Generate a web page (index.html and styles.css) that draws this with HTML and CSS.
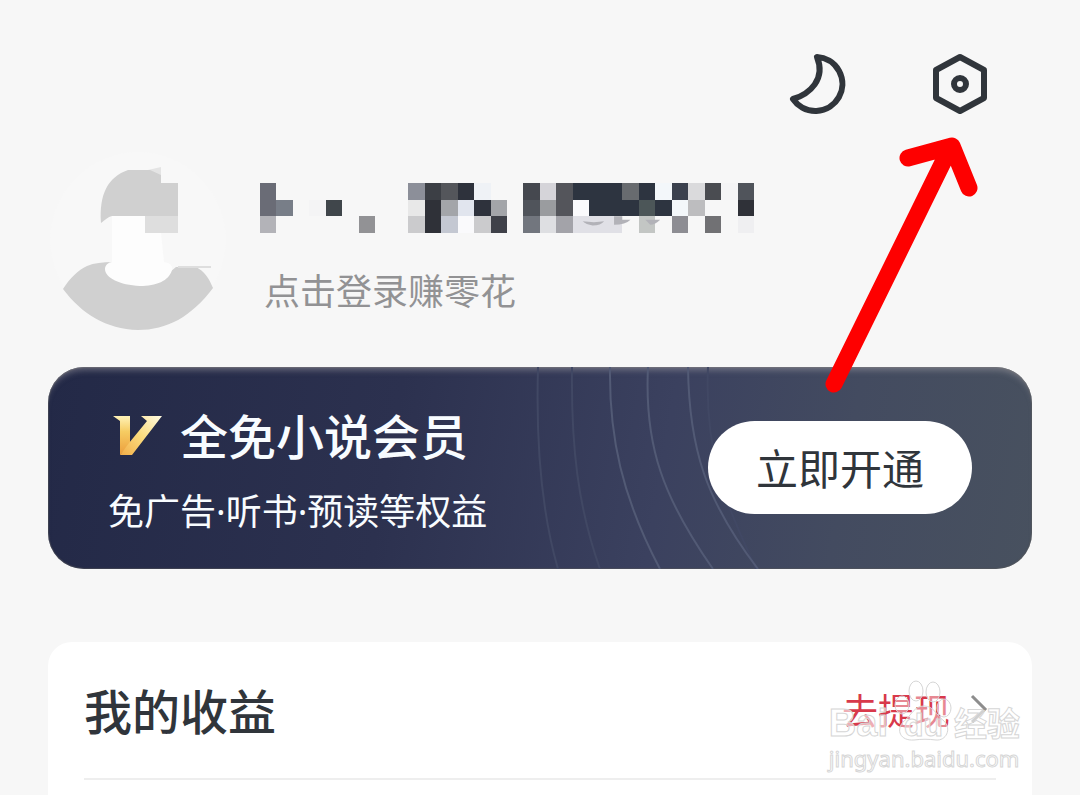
FILE: index.html
```html
<!DOCTYPE html>
<html lang="zh-CN">

<head>
	<meta charset="utf-8">
	<meta name="viewport" content="width=device-width, initial-scale=1">
	<title>我的</title>
	<link rel="stylesheet" href="styles.css">
</head>

<body>
	<header class="topbar">
		<button class="icon-btn" type="button" aria-label="夜间模式">
			<svg width="64" height="64" viewBox="0 0 64 64">
				<path d="M33 5A27 27 0 1 1 9 47C26 42 42 27 33 5Z" />
			</svg>
		</button>
		<button class="icon-btn" type="button" aria-label="设置">
			<svg width="64" height="64" viewBox="0 0 64 64">
				<path d="M32 5L56 18V46L32 59L8 46V18Z" />
				<circle cx="32" cy="32" r="6" />
			</svg>
		</button>
	</header>

	<section class="profile">
		<svg class="avatar" width="180" height="180" viewBox="0 0 180 180">
			<circle cx="90" cy="90" r="88" fill="#f8f8f8" />
			<path fill="#e4e4e4" d="M100 20L113 17V26Z" />
			<path fill="#d0d0d0" d="M53 73C51 44 60 27 80 20H102L113 25V33H130V66H64C60 67 57 70 53 73Z" />
			<path fill="#d0d0d0" d="M15 139C22 128 30 120 39 116C46 113 55 112 64 112L122 122L128 117H148C156 121 161 128 165 138C143 167 119 180 90 180C58 179 34 164 15 139Z" />
			<path fill="#fdfdfd" d="M64 66H97V83H113L116 112C122 113 125 116 124 120C121 131 108 136 92 136C72 135 57 128 57 119C57 115 61 112 64 112Z" />
			<path fill="#dedede" d="M97 66H130V83H97Z" />
			<path fill="#dedede" d="M130 116H163V118H130Z" />
		</svg>
		<div class="profile-text">
			<!-- masked nickname, one unit per block -->
			<svg class="nickname" viewBox="0 0 30 3" preserveAspectRatio="none" shape-rendering="crispEdges">
				<path fill="#6a6c76" d="M0 0h1v2h-1z" />
				<path fill="#8c8f99" d="M9 0h1v1h-1z" />
				<path fill="#3c3f45" d="M10 0h1v1h-1z" />
				<path fill="#54565b" d="M11 0h1v1h-1z" />
				<path fill="#2e323c" d="M12 0h1v1h-1zM13 1h1v1h-1z" />
				<path fill="#eff2f6" d="M13 0h1v1h-1z" />
				<path fill="#45484f" d="M16 0h1v1h-1z" />
				<path fill="#d5d4d9" d="M17 0h1v1h-1z" />
				<path fill="#54555b" d="M18 0h1v2h-1z" />
				<path fill="#2d3440" d="M19 0h3v1h1v1h-3v-1h-1zM23 0h1v1h-1zM24 1h1v1h-1z" />
				<path fill="#686b6f" d="M22 0h1v1h-1z" />
				<path fill="#f3f7fa" d="M24 0h1v1h-1zM25 1h1v1h-1z" />
				<path fill="#3b414e" d="M25 0h1v1h-1z" />
				<path fill="#dadadc" d="M26 0h1v1h-1z" />
				<path fill="#4a4c51" d="M27 0h1v1h-1z" />
				<path fill="#f4f4f5" d="M28 0h1v1h-1zM3 1h1v1h-1z" />
				<path fill="#50545b" d="M29 0h1v1h-1zM16 1h1v1h-1z" />
				<path fill="#787e88" d="M1 1h1v1h-1z" />
				<path fill="#40464b" d="M4 1h1v1h-1z" />
				<path fill="#e8e8e8" d="M9 1h1v1h-1z" />
				<path fill="#2f3138" d="M10 1h1v2h-1zM29 1h1v1h-1z" />
				<path fill="#a3a5a9" d="M11 1h1v1h-1zM14 1h1v1h-1z" />
				<path fill="#e1e5ee" d="M12 1h1v1h-1z" />
				<path fill="#9a9c9f" d="M17 1h1v1h-1z" />
				<path fill="#fafafc" d="M19 1h1v1h-1zM12 2h1v1h-1z" />
				<path fill="#4c5658" d="M23 1h1v1h-1z" />
				<path fill="#bdbdbf" d="M26 1h1v1h-1z" />
				<path fill="#b3b3b8" d="M0 2h1v1h-1z" />
				<path fill="#929295" d="M6 2h1v1h-1z" />
				<path fill="#cbcbcd" d="M9 2h1v1h-1zM13 2h1v1h-1z" />
				<path fill="#c4c8d2" d="M11 2h1v1h-1z" />
				<path fill="#3f4149" d="M14 2h1v1h-1z" />
				<path fill="#72767e" d="M16 2h1v1h-1z" />
				<path fill="#dedfe2" d="M17 2h1v1h-1z" />
				<path fill="#a3a3a9" d="M18 2h1v1h-1z" />
				<path fill="#e0e0e6" d="M19 2h3v1h-3z" />
				<path fill="#c3c6c4" d="M23 2h1v1h-1z" />
				<path fill="#8d8d93" d="M25 2h1v1h-1z" />
				<path fill="#717174" d="M27 2h1v1h-1z" />
				<path fill="#efeff1" d="M29 2h1v1h-1z" />
				<!-- letter bottoms that show below the mask -->
				<g fill="#b2b2b8" shape-rendering="auto">
					<path d="M19.6 2.3Q20.3 2.4 20.9 2.3Q20.7 2.55 20.2 2.55Q19.8 2.5 19.6 2.3Z" />
					<path d="M21.5 2H22V2.2L22.5 2.2Q22.2 2.5 21.5 2.5Z" />
					<path d="M23.4 2.2L24.3 2.2Q24 2.5 23.7 2.5Z" />
				</g>
			</svg>
			<a class="login" href="#">点击登录赚零花</a>
		</div>
	</section>

	<section class="vip">
		<svg class="vip-lines" width="240" height="202" viewBox="0 0 240 202">
			<path class="faint" d="M10 0C8 70 12 140 30 202M44 0C43 80 50 140 72 202M180 0C176 90 200 140 228 202" />
			<path d="M82 0C81 70 94 130 132 202M120 0C116 80 136 132 185 202M160 0C161 82 178 134 230 202" />
		</svg>
		<div class="vip-text">
			<div class="vip-title">
				<svg width="52" height="46" viewBox="0 -4 52 46">
					<defs>
						<linearGradient id="goldL" x1="0" y1="0" x2="0" y2="1">
							<stop offset="0" stop-color="#fff3b8" />
							<stop offset="0.4" stop-color="#f6cc62" />
							<stop offset="1" stop-color="#ec9d3c" />
						</linearGradient>
						<linearGradient id="goldR" x1="1" y1="0" x2="0" y2="1">
							<stop offset="0" stop-color="#fffbe2" />
							<stop offset="0.5" stop-color="#fbdc7e" />
							<stop offset="1" stop-color="#f2ad48" />
						</linearGradient>
					</defs>
					<path fill="url(#goldL)" d="M1 1H18V29L8 40V6Z" />
					<path fill="url(#goldR)" d="M29 1H50L20 40H8L17 28L35 6Z" />
				</svg>
				<h2>全免小说会员</h2>
			</div>
			<p>免广告·听书·预读等权益</p>
		</div>
		<button class="vip-btn" type="button">立即开通</button>
	</section>

	<section class="income">
		<div class="income-head">
			<h2>我的收益</h2>
			<a class="withdraw" href="#">去提现
				<svg width="18" height="32" viewBox="0 0 18 32">
					<path d="M2 3L15 16L2 29" />
				</svg>
			</a>
		</div>
	</section>

	<!-- pointer to the settings button -->
	<svg class="arrow" width="170" height="270" viewBox="0 0 170 270">
		<path d="M14 254L130 18M88 28L132 16L149 58" />
	</svg>

	<div class="watermark">
		<div class="wm-logo">
			<span>Bai</span>
			<svg width="64" height="64" viewBox="0 0 64 64">
				<ellipse cx="12" cy="26" rx="7" ry="9" />
				<ellipse cx="26" cy="12" rx="7" ry="10" />
				<ellipse cx="43" cy="13" rx="7" ry="10" />
				<ellipse cx="54" cy="29" rx="7" ry="9" />
				<path d="M34 27C44 27 46 36 54 42C62 50 56 62 46 61C38 60 32 60 24 61C10 62 6 51 13 43C22 36 24 27 34 27Z" />
				<text x="14" y="57">du</text>
			</svg>
			<span class="wm-cn">经验</span>
		</div>
		<div class="wm-url">jingyan.baidu.com</div>
	</div>
</body>

</html>
```
FILE: styles.css
```css
:root {
	--bg: #f7f7f7;
	--ink: #30353b;
	--grey: #929294;
	--red: #d8394b;
	--side: 48px;
}

* {
	box-sizing: border-box;
}

body {
	position: relative;
	display: flex;
	flex-direction: column;
	min-height: 100vh;
	margin: 0;
	overflow-x: hidden;
	background: var(--bg);
	color: var(--ink);
	font-family: "Noto Sans CJK SC", sans-serif;
}

h2,
p {
	margin: 0;
	font-weight: 400;
}

a {
	text-decoration: none;
}

button {
	border: 0;
	padding: 0;
	cursor: pointer;
	font-family: inherit;
}

svg {
	display: block;
	flex-shrink: 0;
}

.topbar {
	display: flex;
	justify-content: flex-end;
	gap: 80px;
	padding: 52px 88px 0;
}

.icon-btn {
	background: none;
}

.icon-btn svg {
	fill: none;
	stroke: var(--ink);
	stroke-width: 6;
	stroke-linejoin: round;
}

.profile {
	display: flex;
	gap: 32px;
	margin: 34px var(--side) 0;
}

.profile-text {
	flex: 1;
	padding-top: 33px;
}

.nickname {
	width: 494px;
	max-width: 100%;
	height: 50px;
}

.login {
	display: block;
	margin: 30px 4px 0;
	color: var(--grey);
	font-size: 36px;
	line-height: 52px;
}

.vip {
	position: relative;
	display: flex;
	align-items: center;
	justify-content: space-between;
	margin: 37px var(--side) 0;
	padding: 37px 60px 31px;
	border-radius: 36px;
	background: linear-gradient(100deg, #232947 0%, #2c314f 35%, #3b415f 62%, #434b60 80%, #48515f 100%);
	box-shadow: inset 0 7px 6px -4px rgba(170, 165, 170, 0.5), inset 0 0 1px 1px rgba(90, 90, 90, 0.5);
	color: #f8fcff;
}

.vip-lines {
	position: absolute;
	top: 0;
	right: 264px;
	height: 100%;
	fill: none;
	stroke: #525a75;
	stroke-width: 2;
}

.vip-lines .faint {
	stroke: #414864;
}

.vip-title {
	display: flex;
	align-items: center;
	gap: 16px;
	padding-left: 4px;
}

.vip-title h2 {
	font-size: 48px;
	font-weight: 500;
	line-height: 60px;
}

/* Noto Sans first for the narrow middle dot */
.vip-text p {
	margin-top: 22px;
	font-family: "Noto Sans", "Noto Sans CJK SC", sans-serif;
	font-size: 36px;
	line-height: 52px;
}

.vip-btn {
	position: relative;
	margin-bottom: 8px;
	padding: 15px 48px 17px;
	border-radius: 47px;
	background: #fff;
	color: var(--ink);
	font-size: 42px;
	line-height: 61px;
}

.income {
	flex: 1;
	margin: 73px var(--side) 0;
	padding: 0 36px;
	border-radius: 24px 24px 0 0;
	background: #fff;
}

.income-head {
	display: flex;
	align-items: center;
	justify-content: space-between;
	padding: 32px 8px 34px 0;
	border-bottom: 2px solid #eee;
}

.income-head h2 {
	font-size: 48px;
	font-weight: 500;
	line-height: 70px;
}

.withdraw {
	display: flex;
	align-items: center;
	gap: 20px;
	color: var(--red);
	font-size: 36px;
	line-height: 52px;
}

.withdraw svg {
	fill: none;
	stroke: #8d8d8d;
	stroke-width: 3;
}

.arrow {
	position: absolute;
	top: 130px;
	right: 90px;
	fill: none;
	stroke: #fe0000;
	stroke-width: 17;
	stroke-linecap: round;
	stroke-linejoin: round;
	pointer-events: none;
}

.watermark {
	position: absolute;
	top: 679px;
	right: 60px;
	color: rgba(255, 255, 255, 0.6);
	-webkit-text-stroke: 1px #d6d6d6;
	pointer-events: none;
}

.wm-logo {
	display: flex;
	align-items: flex-end;
	font: bold 38px/40px "Liberation Sans", sans-serif;
}

.wm-logo svg {
	margin-left: 2px;
	fill: rgba(255, 255, 255, 0.4);
	stroke: #d6d6d6;
}

.wm-logo text {
	font-size: 32px;
}

.wm-logo .wm-cn {
	font: bold 33px/42px "Noto Sans CJK SC", sans-serif;
}

.wm-url {
	font: 22px/30px "Noto Sans", sans-serif;
}
```
